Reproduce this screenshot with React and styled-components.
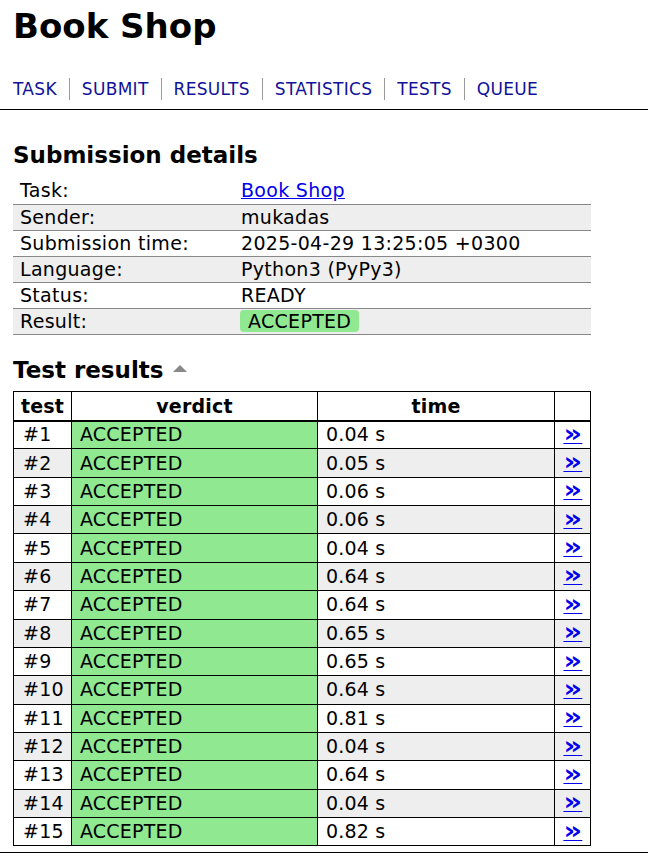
import React from 'react';
import styled, { createGlobalStyle } from 'styled-components';

const GlobalStyle = createGlobalStyle`
  body {
    margin: 0;
    background: #fff;
    color: #000;
    font-family: "DejaVu Sans", Verdana, sans-serif;
  }
`;

const Header = styled.div`
  padding: 0 13px;
`;

const Title = styled.h1`
  margin: 0;
  padding-top: 4px;
  font-size: 34px;
  line-height: 44px;
  font-weight: bold;
`;

const Nav = styled.div`
  display: flex;
  align-items: center;
  margin-top: 30px;
  height: 22px;
`;

const NavLink = styled.a`
  color: #11119a;
  text-decoration: none;
  font-size: 17px;
  letter-spacing: 0.3px;
  line-height: 22px;
  padding: 0 12px;
  border-left: 1px solid #999;
  &:first-child {
    padding-left: 0;
    border-left: none;
  }
`;

const Rule = styled.div`
  margin-top: 9px;
  border-bottom: 1px solid #000;
`;

const Content = styled.div`
  padding: 0 13px;
`;

const SectionTitle = styled.h2`
  margin: 0;
  font-size: 23px;
  line-height: 30px;
  font-weight: bold;
  display: flex;
  align-items: center;
  gap: 9px;
  margin-top: ${p => p.$top}px;
  margin-bottom: ${p => p.$bottom}px;
`;

const SortArrow = styled.span`
  width: 0;
  height: 0;
  border-left: 7px solid transparent;
  border-right: 7px solid transparent;
  border-bottom: 7px solid #888;
  margin-top: -2px;
`;

const DetailsTable = styled.table`
  width: 578px;
  table-layout: fixed;
  border-collapse: collapse;
  font-size: 19px;
  letter-spacing: 0.3px;
`;

const DetailsRow = styled.tr`
  height: 26px;
  background: ${p => (p.$alt ? '#eee' : '#fff')};
  border-bottom: 1px solid #888;
`;

const DetailsCell = styled.td`
  padding: 0 7px;
  line-height: 23px;
  white-space: nowrap;
`;

const Link = styled.a`
  color: #0000ee;
  text-decoration: underline;
`;

const Badge = styled.span`
  display: inline-block;
  background: #90e890;
  border-radius: 4px;
  padding: 0 8px;
  margin-left: -1px;
  line-height: 22px;
`;

const ResultsTable = styled.table`
  width: 578px;
  table-layout: fixed;
  border-collapse: collapse;
  font-size: 19px;
  letter-spacing: 0.2px;
  border: 1px solid #000;
`;

const HeadCell = styled.th`
  border: 1px solid #000;
  border-bottom: 2px solid #000;
  height: 28px;
  padding: 0;
  font-weight: bold;
  text-align: center;
`;

const ResultRow = styled.tr`
  height: 28.36px;
  background: ${p => (p.$alt ? '#eee' : '#fff')};
`;

const Cell = styled.td`
  border: 1px solid #000;
  padding: ${p => p.$pad || '0 8px'};
  line-height: 23px;
  white-space: nowrap;
  text-align: ${p => p.$align || 'left'};
  background: ${p => (p.$verdict ? '#90e890' : 'inherit')};
`;

const Arrow = styled.a`
  display: inline-block;
  color: #0000ee;
  font-weight: bold;
  text-decoration: underline;
  text-decoration-thickness: 1px;
  font-size: 24px;
  line-height: 22px;
  transform: scaleX(1.2);
`;

const BottomRule = styled.div`
  margin-top: 6px;
  border-bottom: 1px solid #000;
`;

const navItems = ['TASK', 'SUBMIT', 'RESULTS', 'STATISTICS', 'TESTS', 'QUEUE'];

const details = [
  ['Task:', <Link href="#">Book Shop</Link>],
  ['Sender:', 'mukadas'],
  ['Submission time:', '2025-04-29 13:25:05 +0300'],
  ['Language:', 'Python3 (PyPy3)'],
  ['Status:', 'READY'],
  ['Result:', <Badge>ACCEPTED</Badge>],
];

const times = ['0.04', '0.05', '0.06', '0.06', '0.04', '0.64', '0.64', '0.65', '0.65', '0.64', '0.81', '0.04', '0.64', '0.04', '0.82'];

export default function App() {
  return (
    <>
      <GlobalStyle />
      <Header>
        <Title>Book Shop</Title>
        <Nav>
          {navItems.map(n => <NavLink key={n} href="#">{n}</NavLink>)}
        </Nav>
      </Header>
      <Rule />
      <Content>
        <SectionTitle $top={30} $bottom={8}>Submission details</SectionTitle>
        <DetailsTable>
          <colgroup>
            <col style={{ width: 221 }} />
            <col />
          </colgroup>
          <tbody>
            {details.map(([k, v], i) => (
              <DetailsRow key={k} $alt={i % 2 === 1}>
                <DetailsCell>{k}</DetailsCell>
                <DetailsCell>{v}</DetailsCell>
              </DetailsRow>
            ))}
          </tbody>
        </DetailsTable>
        <SectionTitle $top={20} $bottom={6}>Test results <SortArrow /></SectionTitle>
        <ResultsTable>
          <colgroup>
            <col style={{ width: 58 }} />
            <col style={{ width: 246 }} />
            <col style={{ width: 237 }} />
            <col />
          </colgroup>
          <thead>
            <tr>
              <HeadCell>test</HeadCell>
              <HeadCell>verdict</HeadCell>
              <HeadCell>time</HeadCell>
              <HeadCell />
            </tr>
          </thead>
          <tbody>
            {times.map((t, i) => (
              <ResultRow key={i} $alt={i % 2 === 1}>
                <Cell $pad="0 0 0 9px">#{i + 1}</Cell>
                <Cell $verdict>ACCEPTED</Cell>
                <Cell>{t} s</Cell>
                <Cell $align="center" $pad="0"><Arrow href="#">»</Arrow></Cell>
              </ResultRow>
            ))}
          </tbody>
        </ResultsTable>
      </Content>
      <BottomRule />
    </>
  );
}
